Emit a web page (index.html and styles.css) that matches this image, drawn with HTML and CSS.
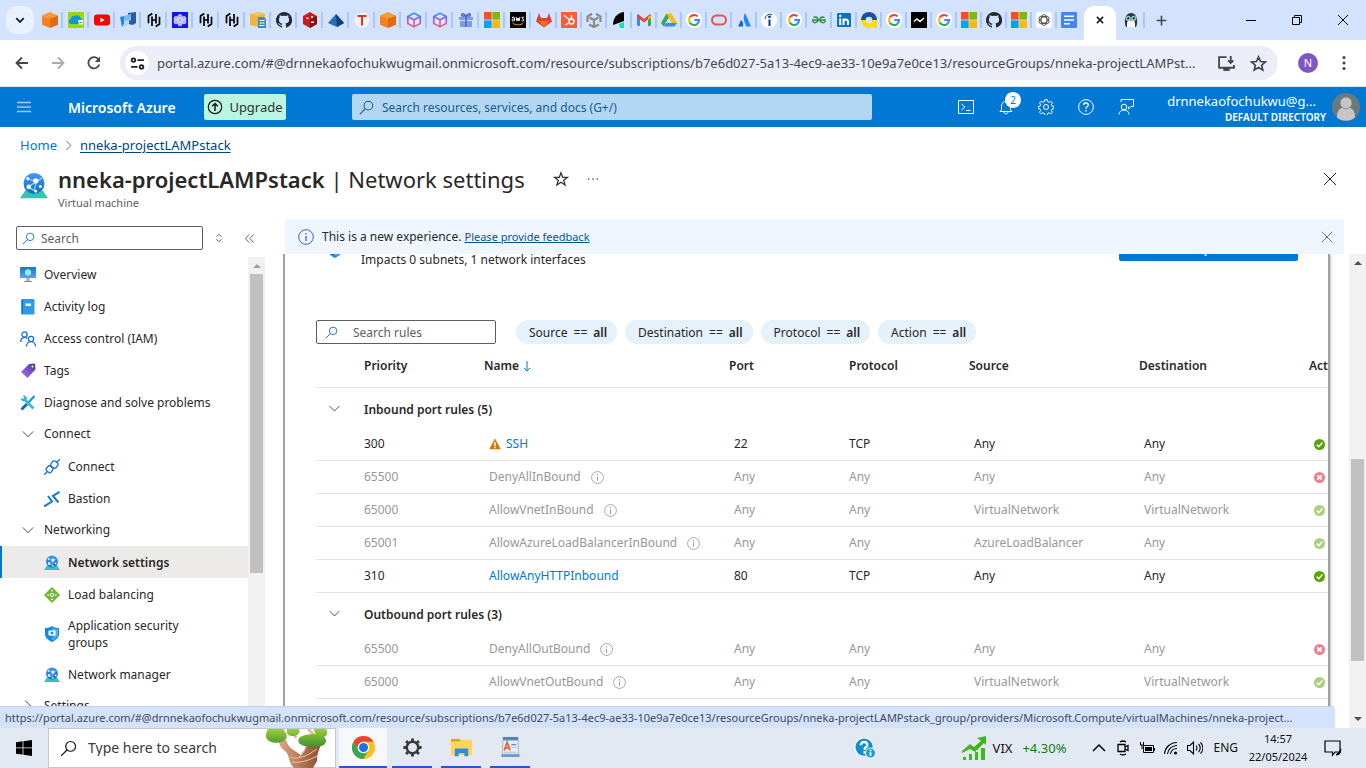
FILE: index.html
```html
<!DOCTYPE html>
<html lang="en">
<head>
<meta charset="utf-8">
<title>nneka-projectLAMPstack - Network settings</title>
<link rel="stylesheet" href="styles.css">
</head>
<body>
<svg class="defs" aria-hidden="true">
  <defs>
    <linearGradient id="g-cube" x1="0" y1="0" x2="0" y2="1"><stop offset="0" stop-color="#2f9cf0"/><stop offset=".5" stop-color="#9a5cf0"/><stop offset="1" stop-color="#f06a78"/></linearGradient>
    <linearGradient id="g-tag" x1="0" y1="1" x2="1" y2="0"><stop offset="0" stop-color="#a67af4"/><stop offset="1" stop-color="#552f99"/></linearGradient>
    <linearGradient id="g-blue" x1="0" y1="0" x2="0" y2="1"><stop offset="0" stop-color="#0f78d4"/><stop offset="1" stop-color="#5ea0ef"/></linearGradient>
    <linearGradient id="g-globe" x1="0" y1="0" x2="0" y2="1"><stop offset="0" stop-color="#3f9bf0"/><stop offset="1" stop-color="#0f6cc8"/></linearGradient>
    <linearGradient id="g-leaf" x1="0" y1="0" x2="0" y2="1"><stop offset="0" stop-color="#9ccc3c"/><stop offset="1" stop-color="#3f8f2f"/></linearGradient>
    <linearGradient id="g-trunk" x1="0" y1="0" x2="1" y2="0"><stop offset="0" stop-color="#e0a487"/><stop offset="1" stop-color="#8a4a2b"/></linearGradient>
  </defs>
  <symbol id="i-box" viewBox="0 0 16 16"><path fill="#fa9a2c" d="M8 0l8 3.500L8 6.500 0 3.500z"/><path fill="#f58220" d="M0 3.500l8 3V16l-8-3.200z"/><path fill="#e06b12" d="M16 3.500l-8 3V16l8-3.200z"/></symbol>
  <symbol id="i-cloudgreen" viewBox="0 0 16 16"><path fill="#9ad80c" d="M0 0h16v16H0z"/><path fill="#1296db" d="M3 12a2.700 2.700 0 0 1-.3-5.300C3.200 4.500 5.200 3.500 7 4c1-1.300 5-1.200 5.400 2C15 6.500 15 12 12 12z"/><path fill="#fff" d="M10 8h5v4.500h-4z"/><path stroke="#1296db" d="M11.500 10.500h2.500"/></symbol>
  <symbol id="i-youtube" viewBox="0 0 16 16"><rect y="2.500" width="16" height="11" rx="3" fill="#f00"/><path fill="#fff" d="M6.300 5.500v5l4.200-2.500z"/></symbol>
  <symbol id="i-azdeploy" viewBox="0 0 16 16"><path fill="#2a5da8" d="M8 1l8-1v11l-3 2-5-1z"/><path fill="#84b8e8" d="M4 4l7-2v6l-7 4z"/><path fill="#1f8bd8" d="M0 5l4-1v8l-2 3z"/><path fill="#b5d8f4" d="M4 9l5-1v4l-5 3z"/></symbol>
  <symbol id="i-hashi" viewBox="0 0 16 16"><path fill="none" stroke="#000" stroke-width="1.700" d="M6.300 1.500L2.500 4v7.300M9.700 14.500l3.800-2.500V4.700M6 14V4.500M10 2v9.500M6 8h4"/></symbol>
  <symbol id="i-nodes" viewBox="0 0 16 16"><path fill="#1414f0" d="M0 0h16v16H0z"/><g fill="#a9a9fb" stroke="#fff" stroke-width=".7"><circle cx="8" cy="4.500" r="2"/><circle cx="4" cy="6.500" r="2"/><circle cx="12" cy="6.500" r="2"/><circle cx="4" cy="9.800" r="2"/><circle cx="12" cy="9.800" r="2"/><circle cx="8" cy="11.800" r="2"/><circle cx="8" cy="8" r="2"/></g></symbol>
  <symbol id="i-logfile" viewBox="0 0 16 16"><path fill="#f3b33c" d="M0 2l9-2 6 2v3H9v10l-9-2z"/><path fill="#f8c65c" d="M0 2l9-2 6 2-8 2z"/><path fill="#3a8cc4" d="M8 5h6l2 2v9H8z"/><path stroke="#fff" d="M9.500 8.500h5M9.500 11h5M9.500 13.500h5"/></symbol>
  <symbol id="i-github" viewBox="0 0 16 16"><path fill="#24292f" d="M8 0a8 8 0 0 0-2.500 15.600c.4.100.5-.2.500-.4v-1.500c-2.200.5-2.700-.9-2.700-.9-.4-.9-.9-1.200-.9-1.200-.7-.5.100-.5.100-.5.800.1 1.200.8 1.200.8.700 1.200 1.900.9 2.300.7.100-.5.300-.9.500-1.100-1.800-.2-3.600-.9-3.600-4 0-.9.300-1.600.8-2.100-.1-.2-.4-1 .1-2.100 0 0 .7-.2 2.200.8a7.500 7.500 0 0 1 4 0c1.500-1 2.200-.8 2.200-.8.400 1.100.2 1.900.1 2.100.5.600.8 1.300.8 2.100 0 3.100-1.900 3.700-3.700 3.900.3.300.6.800.6 1.500v2.300c0 .2.100.5.600.4A8 8 0 0 0 8 0z"/></symbol>
  <symbol id="i-redhex" viewBox="0 0 16 16"><path fill="#c81c1c" d="M8 0l7 4v8l-7 4-7-4V4z"/><path fill="#8a0f0f" d="M8 8l7-4v8l-7 4z"/><path fill="#fff" d="M4.500 5.500h2v1.500h-2zM9 4h2v1.500H9zM9 9.500h3V11H9z"/></symbol>
  <symbol id="i-bluetri" viewBox="0 0 16 16"><path fill="#1e6fc0" d="M8 2l8 9-7 4-9-4z"/><path fill="#0e3f7c" d="M8 2l1 13 7-4z"/></symbol>
  <symbol id="i-redt" viewBox="0 0 16 16"><circle cx="8" cy="8" r="7.500" fill="#f3f3f3"/><path stroke="#d33" stroke-width="2" fill="none" d="M3.500 4h9M8 4v9.500"/></symbol>
  <symbol id="i-cube" viewBox="0 0 16 16"><path fill="#ede9ff" stroke="url(#g-cube)" stroke-width="1.700" d="M8 1.200l6.200 3.400v6.800L8 14.800l-6.200-3.400V4.600zM1.800 4.600L8 8l6.200-3.400M8 8v6.800"/></symbol>
  <symbol id="i-gift" viewBox="0 0 16 16"><path fill="#7d9be8" d="M1 5h14v3H1zM2 9h12v6H2z"/><path stroke="#4767c8" stroke-width="1.500" fill="none" d="M8 4v11M8 4C5 0 3 2 4 4h8c1-2-1-4-4 0"/></symbol>
  <symbol id="i-ms" viewBox="0 0 16 16"><path fill="#f25022" d="M0 0h7.600v7.600H0z"/><path fill="#7fba00" d="M8.400 0H16v7.600H8.400z"/><path fill="#00a4ef" d="M0 8.400h7.600V16H0z"/><path fill="#ffb900" d="M8.400 8.400H16V16H8.400z"/></symbol>
  <symbol id="i-aws" viewBox="0 0 16 16"><path d="M0 0h16v16H0z"/><path fill="none" stroke="#fff" d="M2 5.500c2-1 2.500 0 2.500 1v2C3 9.500 2 9 2 8s1-1.200 2.500-1M6 5l1 4 1-3 1 3 1-4M14 5.500c-1-.6-2.200-.3-2.200.5 0 1 2.200.8 2.200 2 0 1-1.500 1.200-2.500.6"/><path fill="none" stroke="#f90" d="M2.500 11c3 2.500 8 2.500 11 0"/></symbol>
  <symbol id="i-gitlab" viewBox="0 0 16 16"><path fill="#e24329" d="M8 15.500L0 9.500 3 1l2 5h6l2-5 3 8.500z"/><path fill="#fc6d26" d="M8 15.500L3 9h10z"/></symbol>
  <symbol id="i-hubspot" viewBox="0 0 16 16"><path fill="#ff5c35" d="M0 0h16v16H0z"/><path fill="none" stroke="#fff" stroke-width="1.500" d="M10.500 3v4M3 3.500l5.500 4M4.500 13L8 10.500"/><circle cx="10.500" cy="9.500" r="2.500" fill="none" stroke="#fff" stroke-width="1.500"/></symbol>
  <symbol id="i-unity" viewBox="0 0 16 16"><path fill="none" stroke="#8b8b8b" stroke-width="2.200" d="M6 1.800L1.500 4.500v5.500M10 1.800l4.500 2.700v5.500M3 12.500L8 15l5-2.500M8 8v6M8 8L3.500 5.500M8 8l4.500-2.500"/></symbol>
  <symbol id="i-leaf" viewBox="0 0 16 16"><path d="M13 0v9L2 13C2 6 6 1 13 0z"/><path fill="#19e0a5" d="M8 12l5-2v6H9z"/></symbol>
  <symbol id="i-gmail" viewBox="0 0 16 16"><path fill="#4285f4" d="M1 4h3v10H2l-1-1z"/><path fill="#34a853" d="M12 4h3v9l-1 1h-2z"/><path fill="#ea4335" d="M1 3l1-1 6 5 6-5 1 1v2l-7 5.500L1 5z"/><path fill="#fbbc04" d="M12 5l3-2v3l-3 2z"/></symbol>
  <symbol id="i-drive" viewBox="0 0 16 16"><path fill="#34a853" d="M5.500 1.500L0 11l2.500 3.500L8 5z"/><path fill="#fbbc04" d="M5.500 1.500h5L16 11h-5z"/><path fill="#4285f4" d="M5 11h11l-2.500 3.500h-11z"/></symbol>
  <symbol id="i-google" viewBox="0 0 16 16"><circle cx="8" cy="8" r="8" fill="#fff"/><g fill="none" stroke-width="2.200"><path stroke="#ea4335" d="M3.800 5.500A5 5 0 0 1 11.500 4.300"/><path stroke="#fbbc04" d="M3.700 5.500a5 5 0 0 0 0 5"/><path stroke="#34a853" d="M3.700 10.500a5 5 0 0 0 7.800 1.200"/><path stroke="#4285f4" d="M11.500 11.700A5 5 0 0 0 13 8H8.300"/></g></symbol>
  <symbol id="i-oracle" viewBox="0 0 16 16"><rect x="1" y="3.500" width="14" height="9" rx="4.500" fill="none" stroke="#e2574c" stroke-width="2"/></symbol>
  <symbol id="i-atl" viewBox="0 0 16 16"><path fill="#2684ff" d="M9 1l6 13.500h-4.500C8 9 6.500 6 9 1z"/><path fill="#1864d8" d="M5 8c2 1.500 2.500 4 2 6.500H2z"/></symbol>
  <symbol id="i-indeed" viewBox="0 0 16 16"><circle cx="8" cy="8" r="8" fill="#fff"/><path fill="none" stroke="#003a9b" stroke-width="2" d="M8.500 7.500V14"/><circle cx="8.500" cy="4.800" r="1.400" fill="#003a9b"/><path fill="none" stroke="#003a9b" d="M4 7c.5-3.500 3-5.500 7-4.500"/></symbol>
  <symbol id="i-gfg" viewBox="0 0 16 16"><path fill="none" stroke="#2f8d46" stroke-width="1.500" d="M1 8h14M2.500 5.500C5 4 7 5.500 7 8s-4 4-5.500 1M13.500 5.500C11 4 9 5.500 9 8s4 4 5.500 1"/></symbol>
  <symbol id="i-linkedin" viewBox="0 0 16 16"><rect x="1" y="1" width="14" height="14" rx="1" fill="#0a74b8"/><path stroke="#fff" stroke-width="2" fill="none" d="M4.200 6.500V13M7.500 13V6.500M7.500 10c0-3 4.500-3.500 4.500 0v3"/><circle cx="4.200" cy="4" r="1.200" fill="#fff"/></symbol>
  <symbol id="i-coin" viewBox="0 0 16 16"><path fill="#1d4ea0" d="M0 8a8 8 0 0 1 16 0z"/><path fill="#fd0" d="M0 8a8 8 0 0 0 16 0z"/><circle cx="8" cy="8" r="3.300" fill="#d3e2fd"/><path fill="#fd0" d="M11 8h5v8h-4z"/></symbol>
  <symbol id="i-wave" viewBox="0 0 16 16"><path d="M0 0h16v16H0z"/><path fill="none" stroke="#fff" stroke-width="1.500" d="M3 9.500l3-2.500 3 2.500 4-3.500"/></symbol>
  <symbol id="i-gpt" viewBox="0 0 16 16"><rect width="16" height="16" rx="3" fill="#fff"/><g fill="none" stroke="#333" stroke-width=".8"><ellipse cx="8" cy="8" rx="3" ry="5.500"/><ellipse cx="8" cy="8" rx="3" ry="5.500" transform="rotate(60 8 8)"/><ellipse cx="8" cy="8" rx="3" ry="5.500" transform="rotate(120 8 8)"/></g></symbol>
  <symbol id="i-docs" viewBox="0 0 16 16"><rect width="16" height="16" rx="1" fill="#4285f4"/><path stroke="#fff" stroke-width="1.500" d="M3 4.200h10M3 8h10M3 11.800h6"/></symbol>
  <symbol id="i-penguin" viewBox="0 0 16 16"><path fill="#30363c" d="M8 0c4 0 7 4 7 9s-1 7-2 7H3c-1 0-2-2-2-7s3-9 7-9z"/><path fill="#fff" d="M8 8c4 0 5 2 4.500 8h-9C3 10 4 8 8 8z"/><circle cx="4.800" cy="6" r="3" fill="#8cc8d0"/><circle cx="11.200" cy="6" r="3" fill="#8cc8d0"/><circle cx="4.800" cy="6" r="1.200" fill="#111"/><circle cx="11.200" cy="6" r="1.200" fill="#111"/><path fill="#f0a030" d="M6.500 7.500h3L8 10.500z"/></symbol>
  <symbol id="i-search" viewBox="0 0 16 16"><circle cx="10" cy="6" r="4.600" fill="none" stroke="currentColor" stroke-width="1.100"/><path stroke="currentColor" stroke-width="1.100" d="M6.800 9.200L1 15"/></symbol>
  <symbol id="i-x" viewBox="0 0 16 16"><path stroke="currentColor" d="M2 2l12 12M14 2L2 14"/></symbol>
  <symbol id="i-down" viewBox="0 0 16 16"><path fill="none" stroke="currentColor" d="M2 5l6 6 6-6"/></symbol>
  <symbol id="i-vnet" viewBox="0 0 16 16"><path fill="#37c2b1" d="M3 10.500h10l3 4.500H0z"/><circle cx="8" cy="6.500" r="6" fill="url(#g-globe)"/><path fill="none" stroke="#9cd0fa" stroke-width=".7" d="M4.500 4l5 1.500 3-2M9.500 5.500l-1.500 5-3.500-2 5-3"/><g fill="#fff"><circle cx="9" cy="5" r="1.500"/><circle cx="4.500" cy="3.800" r=".9"/><circle cx="5" cy="8.500" r="1.300"/><circle cx="11.600" cy="8.300" r=".9"/><circle cx="9" cy="11" r=".8"/></g></symbol>
  <symbol id="i-monitor" viewBox="0 0 16 16"><rect y="0" width="16" height="11" rx=".6" fill="url(#g-blue)"/><path fill="#9cebff" d="M8 2l3 1.700v3.500L8 9 5 7.200V3.700z"/><path fill="#b3b3b3" d="M6.500 11h3l.5 3H6z"/><path fill="#8c8c8c" d="M4 14h8v1H4z"/></symbol>
  <symbol id="i-book" viewBox="0 0 16 16"><rect x="1.500" y="0" width="13" height="15.500" rx="1.200" fill="#2d9be8"/><path fill="#0f6fc0" d="M1.500 1l1.500-1v15.500l-1.500-1z"/><path fill="#fff" d="M5.500 4.500H11V7H5.500z"/></symbol>
  <symbol id="i-people" viewBox="0 0 16 16"><g fill="none" stroke="#1f6fd4" stroke-width="1.300"><circle cx="4.500" cy="3.500" r="2.600"/><path d="M.7 11c0-5 5-5.500 6.500-3.500"/><circle cx="11" cy="8" r="2.600"/><path d="M6.500 15.500c0-6.500 9-6.500 9 0"/></g></symbol>
  <symbol id="i-tag" viewBox="0 0 16 16"><path fill="url(#g-tag)" d="M9 1l6-.5.500 6L7.500 15 1 9z"/><circle cx="12.500" cy="3.500" r="1" fill="#fff"/></symbol>
  <symbol id="i-tools" viewBox="0 0 16 16"><path stroke="#1490df" stroke-width="2" d="M14.500 1L8 8"/><path stroke="#0f70b8" stroke-width="3" d="M7 9l-5.500 5.500"/><path stroke="#35b8d8" stroke-width="2.600" d="M4 4l9.500 9.500"/><path fill="#35b8d8" d="M1 3l2 1 1-1-1-2.500c3-.5 4.500 2 3.500 4.500L4 6.500C2 6.500.5 5 1 3z"/></symbol>
  <symbol id="i-plug" viewBox="0 0 16 16"><g fill="none" stroke="#1f6fd4" stroke-width="1.300"><path d="M0 16l3.500-3.500M12.500 3.500L16 0"/><rect x="-3" y="-3" width="6" height="6" rx="2" transform="translate(5.500 10.300) rotate(38)"/><rect x="-3.200" y="-3.200" width="6.400" height="6.400" rx="2" transform="translate(10.400 5.600) rotate(38)"/></g></symbol>
  <symbol id="i-bastion" viewBox="0 0 16 16"><g fill="none" stroke="#1478d4" stroke-width="2"><path d="M0 15.500l8-5L4 5"/><path d="M15.500.8L9 5l5.500 6.500"/></g></symbol>
  <symbol id="i-lb" viewBox="0 0 16 16"><path fill="#6fb52a" d="M8 0l8 8-8 8-8-8z"/><circle cx="8" cy="8" r="1.800" fill="#5cc8f0" stroke="#fff" stroke-width=".8"/><path fill="#fff" d="M8 2.500l1.500 1.800h-3zM3 8l1.600-1.400v2.800zM13 8l-1.600-1.400v2.800zM8 13.500l1.500-1.800h-3z"/></symbol>
  <symbol id="i-shield" viewBox="0 0 16 16"><path fill="#1787de" d="M8 0c2 1.500 4 2 7 2v6c0 4-4 6.500-7 8-3-1.500-7-4-7-8V2c3 0 5-.5 7-2z"/><path fill="#4fb0f4" d="M8 1.500c2 1 3.500 1.500 6 1.500v5c0 3-3 5-6 6.500z"/><path fill="#fff" d="M4.500 4.500h7v5h-7z"/><path fill="#1787de" d="M6.700 5.700h2.600v2.600H6.700zM5.500 10.800h5v1h-5z"/></symbol>
  <symbol id="i-info" viewBox="0 0 16 16"><circle cx="8" cy="8" r="7.300" fill="none" stroke="currentColor"/><path stroke="currentColor" stroke-width="1.300" d="M8 7v5M8 4v1.500"/></symbol>
  <symbol id="i-ok" viewBox="0 0 16 16"><circle cx="8" cy="8" r="8" fill="#57a300"/><path fill="none" stroke="#fff" stroke-width="2.200" d="M4 8.200l3 3 5.200-6"/></symbol>
  <symbol id="i-deny" viewBox="0 0 16 16"><circle cx="8" cy="8" r="8" fill="#d9001b"/><path stroke="#fff" stroke-width="2.400" d="M4.800 4.800l6.400 6.400M11.200 4.800l-6.400 6.400"/></symbol>
  <symbol id="i-warn" viewBox="0 0 16 16"><path fill="#db7500" stroke="#db7500" stroke-linejoin="round" d="M8 1.500l7 13H1z"/><path stroke="#fff" stroke-width="2" d="M8 5.500v5M8 11.800v1.700"/></symbol>
</svg>

<header class="tabs">
  <button class="tablist" aria-label="Search tabs"><svg viewBox="0 0 16 16"><path fill="none" stroke="#1f1f1f" stroke-width="2.400" d="M3 5.500l5 5 5-5"/></svg></button>
  <nav class="favs" aria-label="Open tabs">
    <svg class="fav"><use href="#i-box"/></svg><svg class="fav"><use href="#i-cloudgreen"/></svg><svg class="fav"><use href="#i-youtube"/></svg><svg class="fav"><use href="#i-azdeploy"/></svg><svg class="fav"><use href="#i-hashi"/></svg><svg class="fav"><use href="#i-nodes"/></svg><svg class="fav"><use href="#i-hashi"/></svg><svg class="fav"><use href="#i-hashi"/></svg><svg class="fav"><use href="#i-logfile"/></svg><svg class="fav"><use href="#i-github"/></svg><svg class="fav"><use href="#i-redhex"/></svg><svg class="fav"><use href="#i-bluetri"/></svg><svg class="fav"><use href="#i-redt"/></svg><svg class="fav"><use href="#i-box"/></svg><svg class="fav"><use href="#i-cube"/></svg><svg class="fav"><use href="#i-cube"/></svg><svg class="fav"><use href="#i-gift"/></svg><svg class="fav"><use href="#i-ms"/></svg><svg class="fav"><use href="#i-aws"/></svg><svg class="fav"><use href="#i-gitlab"/></svg><svg class="fav narrow"><use href="#i-hubspot"/></svg><svg class="fav narrow"><use href="#i-unity"/></svg><svg class="fav narrow"><use href="#i-leaf"/></svg><svg class="fav narrow"><use href="#i-gmail"/></svg><svg class="fav narrow"><use href="#i-drive"/></svg><svg class="fav narrow"><use href="#i-google"/></svg><svg class="fav narrow"><use href="#i-oracle"/></svg><svg class="fav narrow"><use href="#i-atl"/></svg><svg class="fav narrow"><use href="#i-indeed"/></svg><svg class="fav narrow"><use href="#i-google"/></svg><svg class="fav narrow"><use href="#i-gfg"/></svg><svg class="fav narrow"><use href="#i-linkedin"/></svg><svg class="fav narrow"><use href="#i-coin"/></svg><svg class="fav narrow"><use href="#i-google"/></svg><svg class="fav narrow"><use href="#i-wave"/></svg><svg class="fav narrow"><use href="#i-google"/></svg><svg class="fav narrow"><use href="#i-ms"/></svg><svg class="fav narrow"><use href="#i-github"/></svg><svg class="fav narrow"><use href="#i-ms"/></svg><svg class="fav narrow"><use href="#i-gpt"/></svg><svg class="fav narrow last"><use href="#i-docs"/></svg>
  </nav>
  <button class="tab-active" aria-label="Close tab"><svg viewBox="0 0 16 16"><path stroke="#1f1f1f" stroke-width="2.600" d="M3 3l10 10M13 3L3 13"/></svg></button>
  <svg class="fav penguin"><use href="#i-penguin"/></svg>
  <button class="newtab" aria-label="New tab"><svg viewBox="0 0 16 16"><path stroke="#444746" stroke-width="2" d="M8 2v12M2 8h12"/></svg></button>
  <div class="winbtns">
    <button aria-label="Minimize"><svg viewBox="0 0 16 16"><path stroke="#000" d="M3 8.500h10"/></svg></button>
    <button aria-label="Restore"><svg viewBox="0 0 16 16"><path fill="none" stroke="#000" d="M3.500 5.500h7v7h-7zM5.500 5.500v-2h7v7h-2"/></svg></button>
    <button aria-label="Close"><svg viewBox="0 0 16 16"><path stroke="#000" d="M3 3l10 10M13 3L3 13"/></svg></button>
  </div>
</header>

<div class="toolbar">
  <button aria-label="Back"><svg viewBox="0 0 16 16"><path fill="none" stroke="#444746" stroke-width="1.800" d="M14 8H3M8 2.500L2.500 8 8 13.500"/></svg></button>
  <button aria-label="Forward"><svg viewBox="0 0 16 16"><path fill="none" stroke="#a9abac" stroke-width="1.800" d="M2 8h11M8 2.500L13.500 8 8 13.500"/></svg></button>
  <button aria-label="Reload"><svg viewBox="0 0 16 16"><path fill="none" stroke="#444746" stroke-width="1.800" d="M13.300 9.500A5.600 5.600 0 1 1 12.500 4.500"/><path fill="#444746" d="M14 1.500V7H8.800z"/></svg></button>
  <div class="omnibox">
    <button class="site" aria-label="Site information"><svg viewBox="0 0 16 16"><g fill="none" stroke="#1f1f1f" stroke-width="1.700"><circle cx="4.200" cy="4.800" r="1.700"/><path d="M8 4.800h6M2 11.200h6"/><circle cx="11.800" cy="11.200" r="1.700"/></g></svg></button>
    <input class="url" aria-label="Address" value="portal.azure.com/#@drnnekaofochukwugmail.onmicrosoft.com/resource/subscriptions/b7e6d027-5a13-4ec9-ae33-10e9a7e0ce13/resourceGroups/nneka-projectLAMPst...">
    <button aria-label="Install"><svg viewBox="0 0 16 16"><path fill="none" stroke="#444746" stroke-width="1.700" d="M8 2H1v10h14V9.500M12 1v6M9.500 5L12 7.500 14.500 5"/><path fill="#444746" d="M5 12h6v3H5z"/></svg></button>
    <button aria-label="Bookmark"><svg viewBox="0 0 16 16"><path fill="none" stroke="#444746" stroke-width="1.600" d="M8 1.800l1.900 4.300 4.600.4-3.500 3.100 1 4.600L8 11.800l-4 2.400 1-4.600L1.500 6.500l4.600-.4z"/></svg></button>
  </div>
  <button class="profile">N</button>
  <button class="dots" aria-label="Menu"><svg viewBox="0 0 16 16"><g fill="#444746"><circle cx="8" cy="2.500" r="1.600"/><circle cx="8" cy="8" r="1.600"/><circle cx="8" cy="13.500" r="1.600"/></g></svg></button>
</div>

<div class="azbar">
  <button class="burger" aria-label="Portal menu"><svg viewBox="0 0 16 16"><path stroke="#9accf2" stroke-width="1.300" d="M1 3.500h14M1 8h14M1 12.500h14"/></svg></button>
  <a class="brand" href="#">Microsoft Azure</a>
  <button class="upgrade"><svg viewBox="0 0 16 16"><circle cx="8" cy="8" r="6.700" fill="none" stroke="#1b1a19" stroke-width="1.200"/><path fill="none" stroke="#1b1a19" stroke-width="1.500" d="M8 12V4.500M5.200 7.300L8 4.500l2.800 2.800"/></svg>Upgrade</button>
  <label class="azsearch"><svg><use href="#i-search"/></svg><input aria-label="Search resources" placeholder="Search resources, services, and docs (G+/)"></label>
  <div class="azicons">
    <button aria-label="Cloud Shell"><svg viewBox="0 0 16 16"><path fill="none" stroke="#fff" d="M.5 1.500h15v13H.5zM3.500 5l3.500 3-3.500 3M8 11.500h4.500"/></svg></button>
    <button class="bell" aria-label="Notifications"><svg viewBox="0 0 16 16"><path fill="none" stroke="#fff" d="M2 12.500h12l-1.500-2V7c0-6-9-6-9 0v3.500zM6 13c.5 2.500 3.500 2.500 4 0"/></svg><span class="badge">2</span></button>
    <button aria-label="Settings"><svg viewBox="0 0 16 16"><circle cx="8" cy="8" r="2.500" fill="none" stroke="#fff"/><path fill="none" stroke="#fff" d="M6.800.7h2.400l.4 2 1.500.6 1.700-1.100 1.700 1.700-1.200 1.700.7 1.500 2 .3v2.200l-2 .4-.6 1.500 1.100 1.700-1.700 1.700-1.700-1.200-1.500.7-.4 2H6.800l-.4-2-1.500-.7-1.700 1.200-1.700-1.700 1.200-1.700-.7-1.500-1.500-.4V7.400l1.500-.3.7-1.500-1.200-1.700 1.700-1.700 1.700 1.100 1.500-.6z"/></svg></button>
    <button aria-label="Help"><svg viewBox="0 0 16 16"><circle cx="8" cy="8" r="7.400" fill="none" stroke="#fff"/><path fill="none" stroke="#fff" stroke-width="1.400" d="M5.700 6c.2-3 4.800-2.800 4.600 0C10.200 7.500 8 7.500 8 9.700M8 11v1.500"/></svg></button>
    <button aria-label="Feedback"><svg viewBox="0 0 16 16"><g fill="none" stroke="#fff"><circle cx="6" cy="8" r="2.800"/><path d="M1 15.500c0-6 10-6 10 0M3 3V.5h12.500v7H13l-2.500 2.700V7.500"/></g></svg></button>
  </div>
  <div class="account"><span class="mail">drnnekaofochukwu@g...</span><span class="dir">DEFAULT DIRECTORY</span></div>
  <svg class="avatar" viewBox="0 0 28 28"><circle cx="14" cy="14" r="14" fill="#69797e"/><path fill="#c8c6c4" d="M5 24.500c0-9 4-10 9-10s9 1 9 10a14 14 0 0 1-18 0z"/><circle cx="14" cy="10" r="5.800" fill="#c8c6c4" stroke="#8f979b"/></svg>
</div>

<main class="page">
  <nav class="crumbs"><a href="#">Home</a><svg viewBox="0 0 16 16"><path fill="none" stroke="#605e5c" stroke-width="1.300" d="M5 1.500L11.500 8 5 14.500"/></svg><a class="cur" href="#">nneka-projectLAMPstack</a></nav>
  <div class="titlebar">
    <svg class="big"><use href="#i-vnet"/></svg>
    <div class="titles">
      <h1><b>nneka-projectLAMPstack</b> | Network settings</h1>
      <p>Virtual machine</p>
    </div>
    <button class="star" aria-label="Favourite"><svg viewBox="0 0 16 16"><path fill="none" stroke="#323130" stroke-width="1.200" d="M8 1.800l1.700 4.500h4.800l-3.800 2.900 1.400 4.800L8 11.200 3.900 14l1.400-4.800L1.500 6.300h4.800z"/></svg></button>
    <button class="more" aria-label="More"><svg viewBox="0 0 16 16"><g fill="#323130"><circle cx="3" cy="8" r=".9"/><circle cx="8" cy="8" r=".9"/><circle cx="13" cy="8" r=".9"/></g></svg></button>
    <button class="closepage" aria-label="Close"><svg><use href="#i-x"/></svg></button>
  </div>

  <div class="cols">
    <aside class="side">
      <div class="siderow">
        <label class="box"><svg><use href="#i-search"/></svg><input aria-label="Search menu" placeholder="Search"></label>
        <button aria-label="Expand all"><svg viewBox="0 0 16 16"><path fill="none" stroke="#605e5c" stroke-width="1.600" d="M4 6l4-4 4 4M4 10l4 4 4-4"/></svg></button>
        <button class="collapse" aria-label="Collapse menu"><svg viewBox="0 0 16 16"><path fill="none" stroke="#605e5c" stroke-width="1.400" d="M7.500 2L2 8l5.500 6M14 2L8.500 8l5.500 6"/></svg></button>
      </div>
      <div class="sidebody">
        <nav class="menu">
          <a href="#"><svg><use href="#i-monitor"/></svg>Overview</a>
          <a href="#"><svg><use href="#i-book"/></svg>Activity log</a>
          <a href="#"><svg><use href="#i-people"/></svg>Access control (IAM)</a>
          <a href="#"><svg><use href="#i-tag"/></svg>Tags</a>
          <a href="#"><svg><use href="#i-tools"/></svg>Diagnose and solve problems</a>
          <button><svg><use href="#i-down"/></svg>Connect</button>
          <a class="sub" href="#"><svg><use href="#i-plug"/></svg>Connect</a>
          <a class="sub" href="#"><svg><use href="#i-bastion"/></svg>Bastion</a>
          <button><svg><use href="#i-down"/></svg>Networking</button>
          <a class="sub on" href="#"><svg><use href="#i-vnet"/></svg>Network settings</a>
          <a class="sub" href="#"><svg><use href="#i-lb"/></svg>Load balancing</a>
          <a class="sub tall" href="#"><svg><use href="#i-shield"/></svg><span>Application security groups</span></a>
          <a class="sub" href="#"><svg><use href="#i-vnet"/></svg>Network manager</a>
          <button><svg viewBox="0 0 16 16"><path fill="none" stroke="currentColor" d="M5 2l6 6-6 6"/></svg>Settings</button>
        </nav>
        <div class="sbar"><i class="up light"></i><div class="thumb side-thumb"></div></div>
      </div>
    </aside>

    <section class="content">
      <div class="banner">
        <svg class="inf"><use href="#i-info"/></svg><span>This is a new experience. <a href="#">Please provide feedback</a></span>
        <button aria-label="Dismiss"><svg><use href="#i-x"/></svg></button>
      </div>
      <div class="scroll">
        <div class="pane">
          <div class="nsg">
            <svg><use href="#i-shield"/></svg><span>Impacts 0 subnets, 1 network interfaces</span>
            <button class="create">Create port rule</button>
          </div>
          <div class="filters">
            <label class="box"><svg><use href="#i-search"/></svg><input aria-label="Search rules" placeholder="Search rules"></label>
            <button class="pill"><span>Source</span><span>==</span><b>all</b></button>
            <button class="pill"><span>Destination</span><span>==</span><b>all</b></button>
            <button class="pill"><span>Protocol</span><span>==</span><b>all</b></button>
            <button class="pill"><span>Action</span><span>==</span><b>all</b></button>
          </div>
          <div class="clip">
            <table>
              <colgroup><col class="c0"><col class="c1"><col class="c2"><col class="c1"><col class="c1"><col class="c3"><col class="c3"><col class="c1"></colgroup>
              <thead><tr><th></th><th>Priority</th><th>Name <svg class="sort" viewBox="0 0 10 12"><path fill="none" stroke="currentColor" d="M5 1v10M2 8l3 3 3-3"/></svg></th><th>Port</th><th>Protocol</th><th>Source</th><th>Destination</th><th>Action</th></tr></thead>
              <tbody>
                <tr class="grp"><td><button aria-label="Toggle inbound"><svg><use href="#i-down"/></svg></button></td><td colspan="7">Inbound port rules (5)</td></tr>
                <tr><td></td><td>300</td><td><a href="#"><svg class="wn"><use href="#i-warn"/></svg>SSH</a></td><td>22</td><td>TCP</td><td>Any</td><td>Any</td><td><svg class="st"><use href="#i-ok"/></svg></td></tr>
                <tr class="dim"><td></td><td>65500</td><td>DenyAllInBound<svg class="ii"><use href="#i-info"/></svg></td><td>Any</td><td>Any</td><td>Any</td><td>Any</td><td><svg class="st"><use href="#i-deny"/></svg></td></tr>
                <tr class="dim"><td></td><td>65000</td><td>AllowVnetInBound<svg class="ii"><use href="#i-info"/></svg></td><td>Any</td><td>Any</td><td>VirtualNetwork</td><td>VirtualNetwork</td><td><svg class="st"><use href="#i-ok"/></svg></td></tr>
                <tr class="dim"><td></td><td>65001</td><td>AllowAzureLoadBalancerInBound<svg class="ii"><use href="#i-info"/></svg></td><td>Any</td><td>Any</td><td>AzureLoadBalancer</td><td>Any</td><td><svg class="st"><use href="#i-ok"/></svg></td></tr>
                <tr><td></td><td>310</td><td><a href="#">AllowAnyHTTPInbound</a></td><td>80</td><td>TCP</td><td>Any</td><td>Any</td><td><svg class="st"><use href="#i-ok"/></svg></td></tr>
                <tr class="grp"><td><button aria-label="Toggle outbound"><svg><use href="#i-down"/></svg></button></td><td colspan="7">Outbound port rules (3)</td></tr>
                <tr class="dim"><td></td><td>65500</td><td>DenyAllOutBound<svg class="ii"><use href="#i-info"/></svg></td><td>Any</td><td>Any</td><td>Any</td><td>Any</td><td><svg class="st"><use href="#i-deny"/></svg></td></tr>
                <tr class="dim"><td></td><td>65000</td><td>AllowVnetOutBound<svg class="ii"><use href="#i-info"/></svg></td><td>Any</td><td>Any</td><td>VirtualNetwork</td><td>VirtualNetwork</td><td><svg class="st"><use href="#i-ok"/></svg></td></tr>
              </tbody>
            </table>
          </div>
        </div>
        <div class="sbar main-sbar"><i class="up"></i><div class="thumb main-thumb"></div><i class="dn"></i></div>
      </div>
    </section>
  </div>
  <div class="status">https://portal.azure.com/#@drnnekaofochukwugmail.onmicrosoft.com/resource/subscriptions/b7e6d027-5a13-4ec9-ae33-10e9a7e0ce13/resourceGroups/nneka-projectLAMPstack_group/providers/Microsoft.Compute/virtualMachines/nneka-project...</div>
</main>

<footer class="taskbar">
  <button class="start" aria-label="Start"><svg viewBox="0 0 16 16"><path d="M0 2.300L6.600 1.300v6.200H0zM7.400 1.200L16 0v7.500H7.400zM0 8.300h6.600v6.300L0 13.700zM7.400 8.300H16V16l-8.600-1.200z"/></svg></button>
  <label class="tsearch"><svg class="mag"><use href="#i-search"/></svg><input aria-label="Type here to search" placeholder="Type here to search">
    <svg class="tree" viewBox="0 0 62 39"><path fill="url(#g-trunk)" d="M13 12l7-1c2 8 9 11 15 15 2-4 4-8 6-13l15 1c-4 8-5 12-5 18l-4 7H28c-6-6-4-12-8-16-5-4-7-7-7-11z"/><path fill="#fff" d="M21 10h22c-2 5-4 9-6 13-6-2-14-6-16-13z"/><path fill="none" stroke="#f0c4a4" stroke-width="1" d="M24 28c6 3 16 0 27-8M26 33c8 1 16-1 25-6M41 15c-2 5-2 8-8 13"/><path fill="none" stroke="#e8b9a5" stroke-width="3" d="M12 8L18 0M26 0l4 9M50 8l-8-8M56 0l-6 9"/><path fill="url(#g-leaf)" d="M2 0h14c4 3 6 6 4 10-3 4-12 5-17 2C-2 8 0 4 2 0zM21 0h12c2 3-1 7-6 7s-7-3-6-7zM34 8c8-4 18-4 24 0 4 3 2 8-3 9-8 2-18 1-22-3-1-2-1-4 1-6zM48 0h12c2 3 2 7-3 8-5 0-9-3-9-8z"/></svg>
  </label>
  <button class="app cur" aria-label="Chrome"><svg viewBox="0 0 24 24"><circle cx="12" cy="12" r="12" fill="#fbc116"/><path fill="#ea4335" d="M1.600 6A12 12 0 0 1 22.400 6H12a6 6 0 0 0-5.200 9z"/><path fill="#34a853" d="M1.600 6A12 12 0 0 0 12 24l5.200-9A6 6 0 0 1 6.800 15z"/><circle cx="12" cy="12" r="6" fill="#fff"/><circle cx="12" cy="12" r="4.700" fill="#1a73e8"/></svg></button>
  <button class="app" aria-label="Settings"><svg viewBox="0 0 24 24"><circle cx="12" cy="12" r="6" fill="none" stroke="#3b3b3b" stroke-width="2.600"/><path stroke="#3b3b3b" stroke-width="3" d="M12 6V2.500M12 18v3.500M6 12H2.500M18 12h3.500M7.800 7.800L5.300 5.300M16.200 16.200l2.500 2.500M7.800 16.200l-2.500 2.500M16.200 7.800l2.500-2.500"/></svg></button>
  <button class="app" aria-label="File Explorer"><svg viewBox="0 0 24 24"><path fill="#e0a313" d="M1 3h9l2 3H1z"/><path fill="#ffd55a" d="M1 6h9l2-2h11v16H1z"/><path fill="#2f8fd6" d="M5 21v-8h14v8h-4v-3H9v3z"/></svg></button>
  <button class="app" aria-label="WordPad"><svg viewBox="0 0 24 24"><path fill="#4a86b8" d="M4 1h16v4H4z"/><path fill="#e4edf8" stroke="#9fb6cc" d="M4 4.500h16l.5 14.500h-17z"/><path fill="#6f9ccc" d="M2.500 19h19v3h-19z"/><path fill="none" stroke="#e0692c" stroke-width="1.800" d="M5.500 15l3-8.500 3 8.500M6.500 12.500h4"/><path stroke="#5b8fd0" stroke-width="1.500" d="M13 9h5"/><path stroke="#b9c4d0" d="M13 12h6M5 17h14"/></svg></button>
  <button class="help" aria-label="Help"><svg viewBox="0 0 24 24"><circle cx="11" cy="11" r="10.500" fill="#fff"/><circle cx="11" cy="11" r="9.400" fill="#0f8fd0"/><path fill="none" stroke="#fff" stroke-width="2.600" d="M7.500 9c0-5 7.500-4.500 7 0-.2 2-3 2-3 5M11.500 15.500V18"/><circle cx="18" cy="17.500" r="5.500" fill="#1a9ddb" stroke="#fff"/><path stroke="#fff" stroke-width="2" d="M18 16.500v4M18 14v1.500"/></svg></button>
  <div class="tray">
    <svg class="chart" viewBox="0 0 24 24"><path fill="#3fb51c" d="M0 15l8-7 4 3 7-6-4-3 9-2v9l-2-2-9 9-5-3-8 4z"/><path fill="#41b91d" d="M1 21h3v3H1zM7 18h3v6H7zM13 16h3v8h-3zM19 12h4v12h-4z"/></svg>
    <span class="vix">VIX</span><span class="pct">+4.30%</span>
    <svg viewBox="0 0 16 16"><path fill="none" stroke="#000" stroke-width="1.500" d="M2 11l6-6 6 6"/></svg>
    <svg viewBox="0 0 16 16"><path fill="none" stroke="#000" stroke-width="1.300" d="M3 4.500h7v7H3zM10 7l3-1.500v5L10 9M5 2c2-1.300 4-1.300 6 0M5 14c2 1.300 4 1.300 6 0"/></svg>
    <svg viewBox="0 0 16 16"><path fill="none" stroke="#000" d="M4.500 5.500h10v7h-10zM15.500 8v3M1.500 2v3h3V2M3 5v4"/><path d="M6 7h7v4H6z"/></svg>
    <svg viewBox="0 0 16 16"><path fill="none" stroke="#000" stroke-width="1.200" d="M1.500 14A12.500 12.500 0 0 1 14 2.500M4.500 14A9.500 9.500 0 0 1 14 5.500M7.500 14A6.500 6.500 0 0 1 14 8.500"/><circle cx="12.500" cy="13" r="1.600"/></svg>
    <svg viewBox="0 0 16 16"><path fill="none" stroke="#000" stroke-width="1.100" d="M.5 5.500h2.500L6.500 2v12L3 10.500H.5zM9 5.500c1.200 1.500 1.200 3.500 0 5M11.500 3.800c2 2.500 2 6 0 8.400M13.500 2.300c3 3.400 3 8 0 11.400"/></svg>
    <span class="lang">ENG</span>
    <span class="clock">14:57<br>22/05/2024</span>
    <svg class="note" viewBox="0 0 18 18"><path fill="none" stroke="#000" stroke-width="1.200" d="M1 2h15v11h-5l-2.500 3v-3H1z"/><path d="M17 9c1 4-1 7.500-5 7.500 0-2 1-2.500 3-3.500z"/></svg>
  </div>
</footer>
</body>
</html>
```

FILE: styles.css
```css
* { box-sizing: border-box; }
body {
  margin: 0; height: 100vh; display: flex; flex-direction: column; overflow: hidden;
  font: 12px/16px "Noto Sans", "Open Sans", sans-serif; color: #292827; background: #fff;
}
button, input { font: inherit; color: inherit; border: 0; padding: 0; margin: 0; background: none; }
button { display: flex; align-items: center; justify-content: center; flex: none; }
input { min-width: 0; flex: 1; outline: 0; }
svg { width: 16px; height: 16px; flex: none; display: block; }
a { color: #0078d4; text-decoration: none; }
.defs { position: absolute; width: 0; height: 0; }

/* browser tabs */
.tabs { flex: none; height: 40px; display: flex; align-items: center; background: #d3e2fd; padding-left: 6px; }
.tablist { width: 28px; height: 28px; border-radius: 10px; background: #e9f0fe; }
.tablist svg { width: 12px; height: 12px; }
.favs { display: flex; padding-left: 3px; }
.fav { width: 26px; height: 16px; padding: 0 3px 0 5px; border-right: 2px solid #a8c7fa; }
.narrow { width: 25px; padding: 0 3px 0 4px; }
.fav.last { border-color: transparent; }
.tab-active { width: 32px; height: 34px; margin: 6px 0 0 2px; background: #fff; border-radius: 10px 10px 0 0; padding-bottom: 6px; }
.tab-active svg { width: 10px; height: 10px; }
.penguin { width: 29px; padding: 0 5px 0 8px; }
.newtab { width: 32px; height: 28px; }
.newtab svg { width: 13px; height: 13px; }
.winbtns { margin-left: auto; display: flex; }
.winbtns button { width: 46px; height: 40px; }

/* address bar */
.toolbar { flex: none; height: 47px; display: flex; align-items: center; background: #fff; border-bottom: 1px solid #dfe2e8; padding-left: 4px; }
.toolbar > button { width: 36px; height: 36px; }
.omnibox { flex: 1; height: 34px; margin: 0 12px 0 8px; border-radius: 17px; background: #ebeef8; display: flex; align-items: center; padding: 0 8px 0 5px; gap: 8px; }
.omnibox button { width: 24px; height: 24px; }
.omnibox .site { border-radius: 50%; background: #fff; }
.url { font-size: 13px; height: 24px; color: #44474b; margin-right: -8px; }
.omnibox svg { width: 17px; height: 17px; }
.toolbar > .profile { width: 20px; height: 20px; border-radius: 50%; background: #7e57c2; color: #fff; font-size: 11px; margin: 0 8px; }
.toolbar .dots { margin-right: 4px; }

/* portal header */
.azbar { flex: none; height: 40px; background: #0078d4; color: #fff; display: flex; align-items: center; padding: 0 6px 0 16px; }
.brand { color: #fff; font-size: 14px; font-weight: 600; width: 136px; margin-left: 36px; padding-top: 2px; }
.upgrade { height: 26px; width: 82px; gap: 6px; background: #b9f5e1; color: #323130; border-radius: 2px; font-size: 13px; }
.azsearch { flex: 0 1 520px; height: 26px; margin-left: 66px; background: #b3d7f2; border-radius: 2px; display: flex; align-items: center; gap: 8px; padding: 1px 6px 0 7px; color: #1a5a96; }
.azsearch svg { width: 15px; height: 15px; }
.azsearch input::placeholder { color: #1a5a96; opacity: 1; }
.azicons { margin-left: auto; display: flex; }
.azicons button { width: 40px; height: 40px; }
.bell { position: relative; }
.badge { position: absolute; left: 19px; top: 5px; width: 16px; height: 16px; border-radius: 50%; background: #fff; color: #0078d4; font-size: 10px; line-height: 16px; text-align: center; }
.account { width: 180px; display: flex; flex-direction: column; align-items: flex-end; padding-top: 2px; line-height: 14px; }
.mail { font-size: 13px; padding-right: 10px; line-height: 17px; }
.dir { font-size: 10px; font-weight: 600; }
.avatar { width: 28px; height: 28px; margin-left: 6px; }

/* page heading */
.page { flex: 1; min-height: 0; display: flex; flex-direction: column; position: relative; }
.crumbs { flex: none; height: 36px; padding-left: 20px; display: flex; align-items: center; gap: 6px; font-size: 13px; }
.crumbs svg { width: 11px; height: 11px; }
.crumbs .cur { color: #004578; text-decoration: underline; text-underline-offset: 2px; }
.titlebar { flex: none; height: 56px; display: flex; padding: 0 28px 0 20px; }
.big { width: 28px; height: 28px; margin-top: 9px; }
.titles { margin-left: 10px; }
h1 { margin: 0; font-size: 22px; line-height: 32px; font-weight: 400; }
h1 b { font-weight: 600; }
.titles p { margin: 0; font-size: 11px; line-height: 16px; color: #605e5c; }
.star { width: 16px; height: 32px; margin-left: 28px; }
.more { width: 16px; height: 32px; margin-left: 16px; }
.more svg { width: 14px; height: 14px; }
.closepage { width: 16px; height: 32px; margin-left: auto; }

/* side menu */
.cols { flex: 1; min-height: 0; display: flex; }
.side { flex: none; width: 265px; display: flex; flex-direction: column; }
.siderow { flex: none; height: 38px; display: flex; align-items: center; padding-left: 16px; }
.box { display: flex; align-items: center; height: 24px; border: 1px solid #605e5c; border-radius: 2px; padding: 1px 5px 0; gap: 6px; color: #0f6cbd; }
.box svg { width: 13px; height: 13px; }
.siderow .box { width: 187px; }
.box input::placeholder { color: #605e5c; opacity: 1; }
.siderow button { width: 30px; height: 24px; margin-left: 1px; }
.siderow button svg { width: 10px; height: 10px; }
.siderow .collapse { margin-left: 0; }
.siderow .collapse svg { width: 11px; height: 11px; }
.sidebody { flex: 1; min-height: 0; display: flex; overflow: hidden; }
.menu { flex: 1; padding-top: 1px; }
.menu a, .menu button { display: flex; align-items: center; justify-content: flex-start; height: 32px; gap: 8px; padding: 1px 0 0 20px; color: #292827; width: 100%; }
.menu button { padding-top: 0; }
.menu button svg { width: 16px; height: 14px; }
.menu .sub { padding-left: 44px; }
.menu .tall { height: 48px; padding: 0 40px 1px 44px; line-height: 17px; }
.menu .on { background: #edebe9; font-weight: 600; border-left: 2px solid #0078d4; padding-left: 42px; }
.sbar { flex: none; width: 17px; background: #f1f1f1; display: flex; flex-direction: column; align-items: center; }
.up, .dn { border: 4px solid transparent; }
.up { border-top: 0; border-bottom-color: #505050; margin: 7px 0 6px; }
.up.light { border-bottom-color: #a0a0a0; }
.dn { border-bottom: 0; border-top-color: #505050; margin: auto 0 7px; }
.thumb { width: 13px; background: #c1c1c1; }
.side-thumb { height: 299px; }
.main-thumb { height: 202px; margin-top: 188px; }

/* content */
.content { flex: 1; min-width: 0; margin-left: 18px; display: flex; flex-direction: column; }
.banner { flex: none; height: 35px; margin: 0 22px 0 2px; background: #eff6ff; display: flex; align-items: center; padding: 0 10px 0 13px; gap: 8px; }
.banner a { color: #00578f; text-decoration: underline; font-size: 11px; }
.banner button { margin-left: auto; color: #605e5c; }
.banner button svg { width: 14px; height: 14px; }
.inf { color: #3b5bdb; }
.scroll { flex: 1; min-height: 0; display: flex; overflow: hidden; }
.pane { flex: 1; min-width: 0; border: solid #a0a0a0; border-width: 0 2px; box-shadow: 0 0 3px #999; padding-left: 31px; }
.main-sbar { margin-left: 19px; }
.nsg { height: 66px; display: flex; align-items: flex-start; padding: 0 30px 0 11px; }
.nsg svg { margin-top: -12px; }
.nsg span { margin: -2px 0 0 18px; }
.create { margin: -25px 0 0 auto; width: 179px; height: 32px; padding-top: 8px; border-radius: 2px; background: #0078d4; color: #fff; font-weight: 600; }
.filters { display: flex; align-items: center; gap: 8px; }
.filters .box { width: 180px; margin-right: 12px; padding-left: 8px; gap: 15px; }
.pill { height: 24px; padding: 1px 10px 0 13px; border-radius: 12px; background: #e5f1fb; gap: 6px; }
.pill b { font-weight: 600; }

/* rules table */
.clip { overflow: hidden; }
table { width: 1113px; table-layout: fixed; border-collapse: separate; border-spacing: 0; }
.c0 { width: 48px; } .c1 { width: 120px; } .c2 { width: 245px; } .c3 { width: 170px; }
th, td { padding: 0 0 0 5px; height: 33px; text-align: left; border-bottom: 1px solid #e6e5e4; white-space: nowrap; }
th { height: 44px; padding: 0; font-weight: 600; }
td:nth-child(1), td:nth-child(2), td:nth-child(5) { padding-left: 0; }
.grp td { height: 40px; border: 0; font-weight: 600; padding-top: 3px; }
.grp button { margin: 0 0 2px 12px; }
.grp svg { width: 13px; height: 13px; }
.sort { color: #0078d4; width: 10px; height: 12px; display: inline-block; vertical-align: -2px; }
td a { display: flex; align-items: center; }
.wn { width: 12px; height: 12px; margin-right: 5px; }
.ii { width: 13px; height: 13px; display: inline-block; vertical-align: -3px; margin-left: 10px; }
.st { width: 11px; height: 11px; }
.dim { color: #989796; }
.dim .st { opacity: .5; }

.status { position: absolute; left: 0; right: 31px; bottom: 0; height: 22px; padding: 0 6px 0 5px; background: #d3e2fd; color: #474b52; border-top: 1px solid #c3cfe6; border-radius: 0 4px 0 0; font-size: 11px; line-height: 21px; white-space: nowrap; overflow: hidden; }

/* taskbar */
.taskbar { flex: none; height: 40px; display: flex; align-items: center; background: #e3e9f2; color: #111; }
.start { width: 48px; height: 40px; }
.tsearch { width: 288px; height: 40px; border: 1px solid #c4c7cc; background: #fff; display: flex; align-items: center; padding-left: 11px; gap: 11px; margin-right: 3px; }
.tsearch input { font-size: 14px; }
.tsearch input::placeholder { color: #3a3a3a; opacity: 1; }
.mag { width: 17px; height: 17px; }
.tree { width: 62px; height: 39px; margin-right: 7px; }
.app { width: 40px; height: 40px; border-bottom: 2px solid #2659cf; margin-left: 9px; }
.app.cur { width: 48px; margin: 0 -4px 0 0; background: #f6f8fb; }
.app svg { width: 23px; height: 23px; }
.help { margin-left: auto; }
.help svg { width: 22px; height: 22px; }
.tray { display: flex; align-items: center; margin-left: 85px; padding-right: 24px; gap: 8px; }
.chart { width: 26px; height: 24px; margin-right: -2px; }
.vix, .pct { font-size: 13px; }
.vix { margin-right: 2px; }
.pct { color: #107c10; margin-right: 17px; }
.lang { font-size: 12px; margin-left: 2px; }
.clock { width: 76px; margin-left: -6px; text-align: center; font-size: 11px; line-height: 18px; }
.note { width: 18px; height: 18px; }
```
